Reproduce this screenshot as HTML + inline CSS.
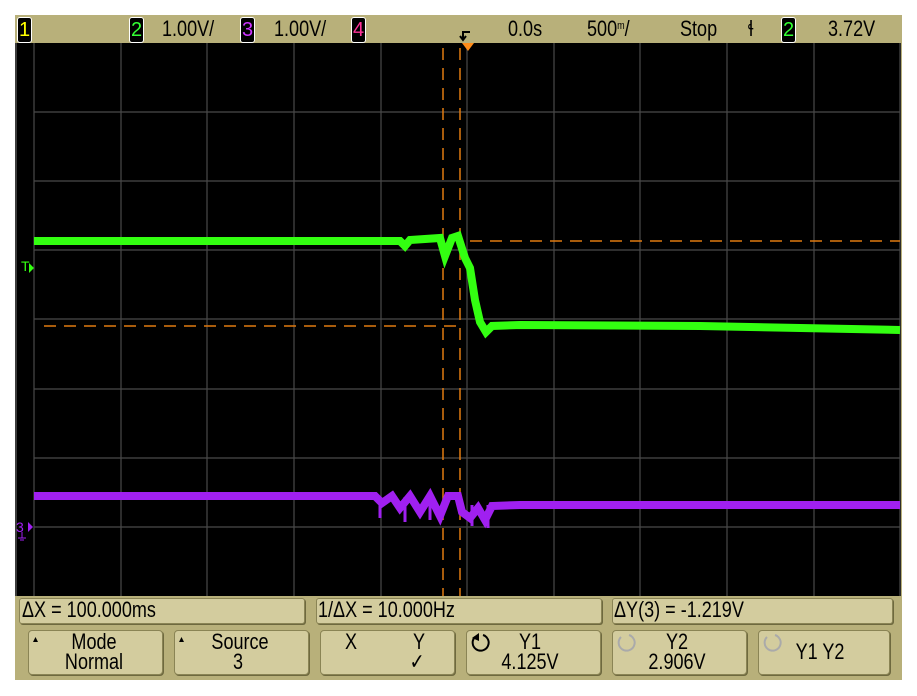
<!DOCTYPE html>
<html><head><style>
body{margin:0;width:917px;height:696px;background:#fff;position:relative;overflow:hidden;font-family:"Liberation Sans",sans-serif;}
#frame{position:absolute;left:15px;top:15px;width:887px;height:665px;background:#b8b07a;}
.t{position:absolute;font-size:22px;color:#000;transform:scaleX(0.82);transform-origin:left top;white-space:nowrap}
.ch{position:absolute;top:17px;width:13px;height:24px;background:#000;border:1px solid #fff;border-radius:3px;font-size:20px;text-align:center;line-height:24px}
.bar{position:absolute;top:598px;height:24px;background:#d3cc9e;border:1px solid #8a8455;border-radius:3px;box-shadow:1px 1px 0 #6e693f}
.btn{position:absolute;top:630px;width:141px;height:43px;background:#d3cc9e;border:1px solid #8a8455;border-radius:4px;box-shadow:1px 1px 0 #6e693f}
.bl{position:absolute;font-size:22px;transform:scaleX(0.82);transform-origin:center top;white-space:nowrap;text-align:center;width:100px;margin-left:-50px;line-height:22px}
</style></head><body>
<div id="frame"></div>
<div class="ch" style="left:17px;color:#ff0">1</div>
<div class="ch" style="left:129px;color:#3f3">2</div>
<div class="t" style="left:162px;top:16px">1.00V/</div>
<div class="ch" style="left:240px;color:#c3f">3</div>
<div class="t" style="left:274px;top:16px">1.00V/</div>
<div class="ch" style="left:351px;color:#f39">4</div>
<div class="t" style="left:508px;top:16px">0.0s</div>
<div class="t" style="left:587px;top:16px">500<span style="font-size:11px;vertical-align:7px">m</span>/</div>
<div class="t" style="left:680px;top:16px">Stop</div>
<div class="t" style="left:748px;top:16px">ɬ</div>
<div class="ch" style="left:781px;color:#3f3">2</div>
<div class="t" style="left:828px;top:16px">3.72V</div>
<svg style="position:absolute;left:0;top:0" width="917" height="696">
<path d="M470 32h-7v8M466 36l-3 4l-3-4" stroke="#000" stroke-width="2" fill="none"/>
<rect x="15" y="43" width="886" height="553" fill="#000"/>
<line x1="16" y1="43" x2="16" y2="596" stroke="#777"/>
<g stroke="#4a4a4a" stroke-width="1.2">
<line x1="34" y1="43" x2="34" y2="596"/><line x1="121" y1="43" x2="121" y2="596"/><line x1="207" y1="43" x2="207" y2="596"/><line x1="294" y1="43" x2="294" y2="596"/><line x1="381" y1="43" x2="381" y2="596"/><line x1="467" y1="43" x2="467" y2="596"/><line x1="554" y1="43" x2="554" y2="596"/><line x1="640" y1="43" x2="640" y2="596"/><line x1="727" y1="43" x2="727" y2="596"/><line x1="814" y1="43" x2="814" y2="596"/><line x1="900" y1="43" x2="900" y2="596"/>
<line x1="34" y1="112" x2="900" y2="112"/><line x1="34" y1="181" x2="900" y2="181"/><line x1="34" y1="250" x2="900" y2="250"/><line x1="34" y1="319" x2="900" y2="319"/><line x1="34" y1="389" x2="900" y2="389"/><line x1="34" y1="458" x2="900" y2="458"/><line x1="34" y1="527" x2="900" y2="527"/>
</g>
<g stroke="#e07a10" stroke-width="1.5" stroke-dasharray="12 8" fill="none">
<line x1="44" y1="326" x2="460" y2="326"/>
<line x1="470" y1="241" x2="900" y2="241"/>
<line x1="443" y1="48" x2="443" y2="596"/>
<line x1="460" y1="48" x2="460" y2="596"/>
</g>
<polygon points="462,43 474,43 468,51" fill="#ff8c1a"/>
<path d="M34 241 H400 L405 246 L410 240 L440 238 L445 256 L452 238 L458 236 L465 258 L470 268 L475 300 L480 322 L486 332 L492 326 L520 325 L700 326 L900 330" stroke="#33ff11" stroke-width="8" fill="none"/>
<path d="M34 496 H375 L382 503 L392 496 L400 508 L410 496 L420 512 L430 496 L440 516 L448 496 L458 496 L462 512 L470 518 L478 508 L485 520 L492 506 L520 505 L900 505" stroke="#a020f0" stroke-width="8" fill="none"/>
<path d="M380 497V518M405 497V522M430 497V520M472 505V526M488 505V528" stroke="#a020f0" stroke-width="3"/>
<text x="21" y="271" fill="#33ff11" font-size="14" font-family="Liberation Sans">T</text>
<polygon points="29,263 34,268 29,273" fill="#33ff11"/>
<text x="16" y="532" fill="#a020f0" font-size="14" font-family="Liberation Sans">3</text>
<polygon points="28,522 33,527 28,532" fill="#a020f0"/>
<path d="M22 532v6M18 538h8M20 540h4" stroke="#a020f0"/>
</svg>
<div class="bar" style="left:19px;width:284px"></div>
<div class="bar" style="left:316px;width:284px"></div>
<div class="bar" style="left:612px;width:279px"></div>
<div class="t" style="left:22px;top:597px">ΔX = 100.000ms</div>
<div class="t" style="left:318px;top:597px">1/ΔX = 10.000Hz</div>
<div class="t" style="left:614px;top:597px">ΔY(3) = -1.219V</div>
<div class="btn" style="left:28px;width:133px"></div>
<div class="btn" style="left:174px;width:133px"></div>
<div class="btn" style="left:320px;width:133px"></div>
<div class="btn" style="left:466px;width:133px"></div>
<div class="btn" style="left:612px;width:133px"></div>
<div class="btn" style="left:758px;width:130px"></div>
<div class="bl" style="left:94px;top:631px">Mode</div>
<div class="bl" style="left:94px;top:651px">Normal</div>
<div class="bl" style="left:240px;top:631px">Source</div>
<div class="bl" style="left:238px;top:651px">3</div>
<div class="bl" style="left:351px;top:631px">X</div>
<div class="bl" style="left:419px;top:631px">Y</div>
<div class="bl" style="left:417px;top:651px">✓</div>
<div class="bl" style="left:530px;top:631px">Y1</div>
<div class="bl" style="left:530px;top:651px">4.125V</div>
<div class="bl" style="left:677px;top:631px">Y2</div>
<div class="bl" style="left:677px;top:651px">2.906V</div>
<div class="bl" style="left:820px;top:641px">Y1 Y2</div>
<svg style="position:absolute;left:0;top:0" width="917" height="696">
<polygon points="33,642 38,642 35.5,637" fill="#000"/>
<polygon points="179,642 184,642 181.5,637" fill="#000"/>
<path d="M475 637 a8 8 0 1 0 8 -2" stroke="#000" stroke-width="2" fill="none"/><polygon points="472,638 479,633 479,641" fill="#000"/>
<path d="M621 637 a8 8 0 1 0 8 -2" stroke="#aaa" stroke-width="2" fill="none"/>
<path d="M767 637 a8 8 0 1 0 8 -2" stroke="#aaa" stroke-width="2" fill="none"/>
</svg>
</body></html>
